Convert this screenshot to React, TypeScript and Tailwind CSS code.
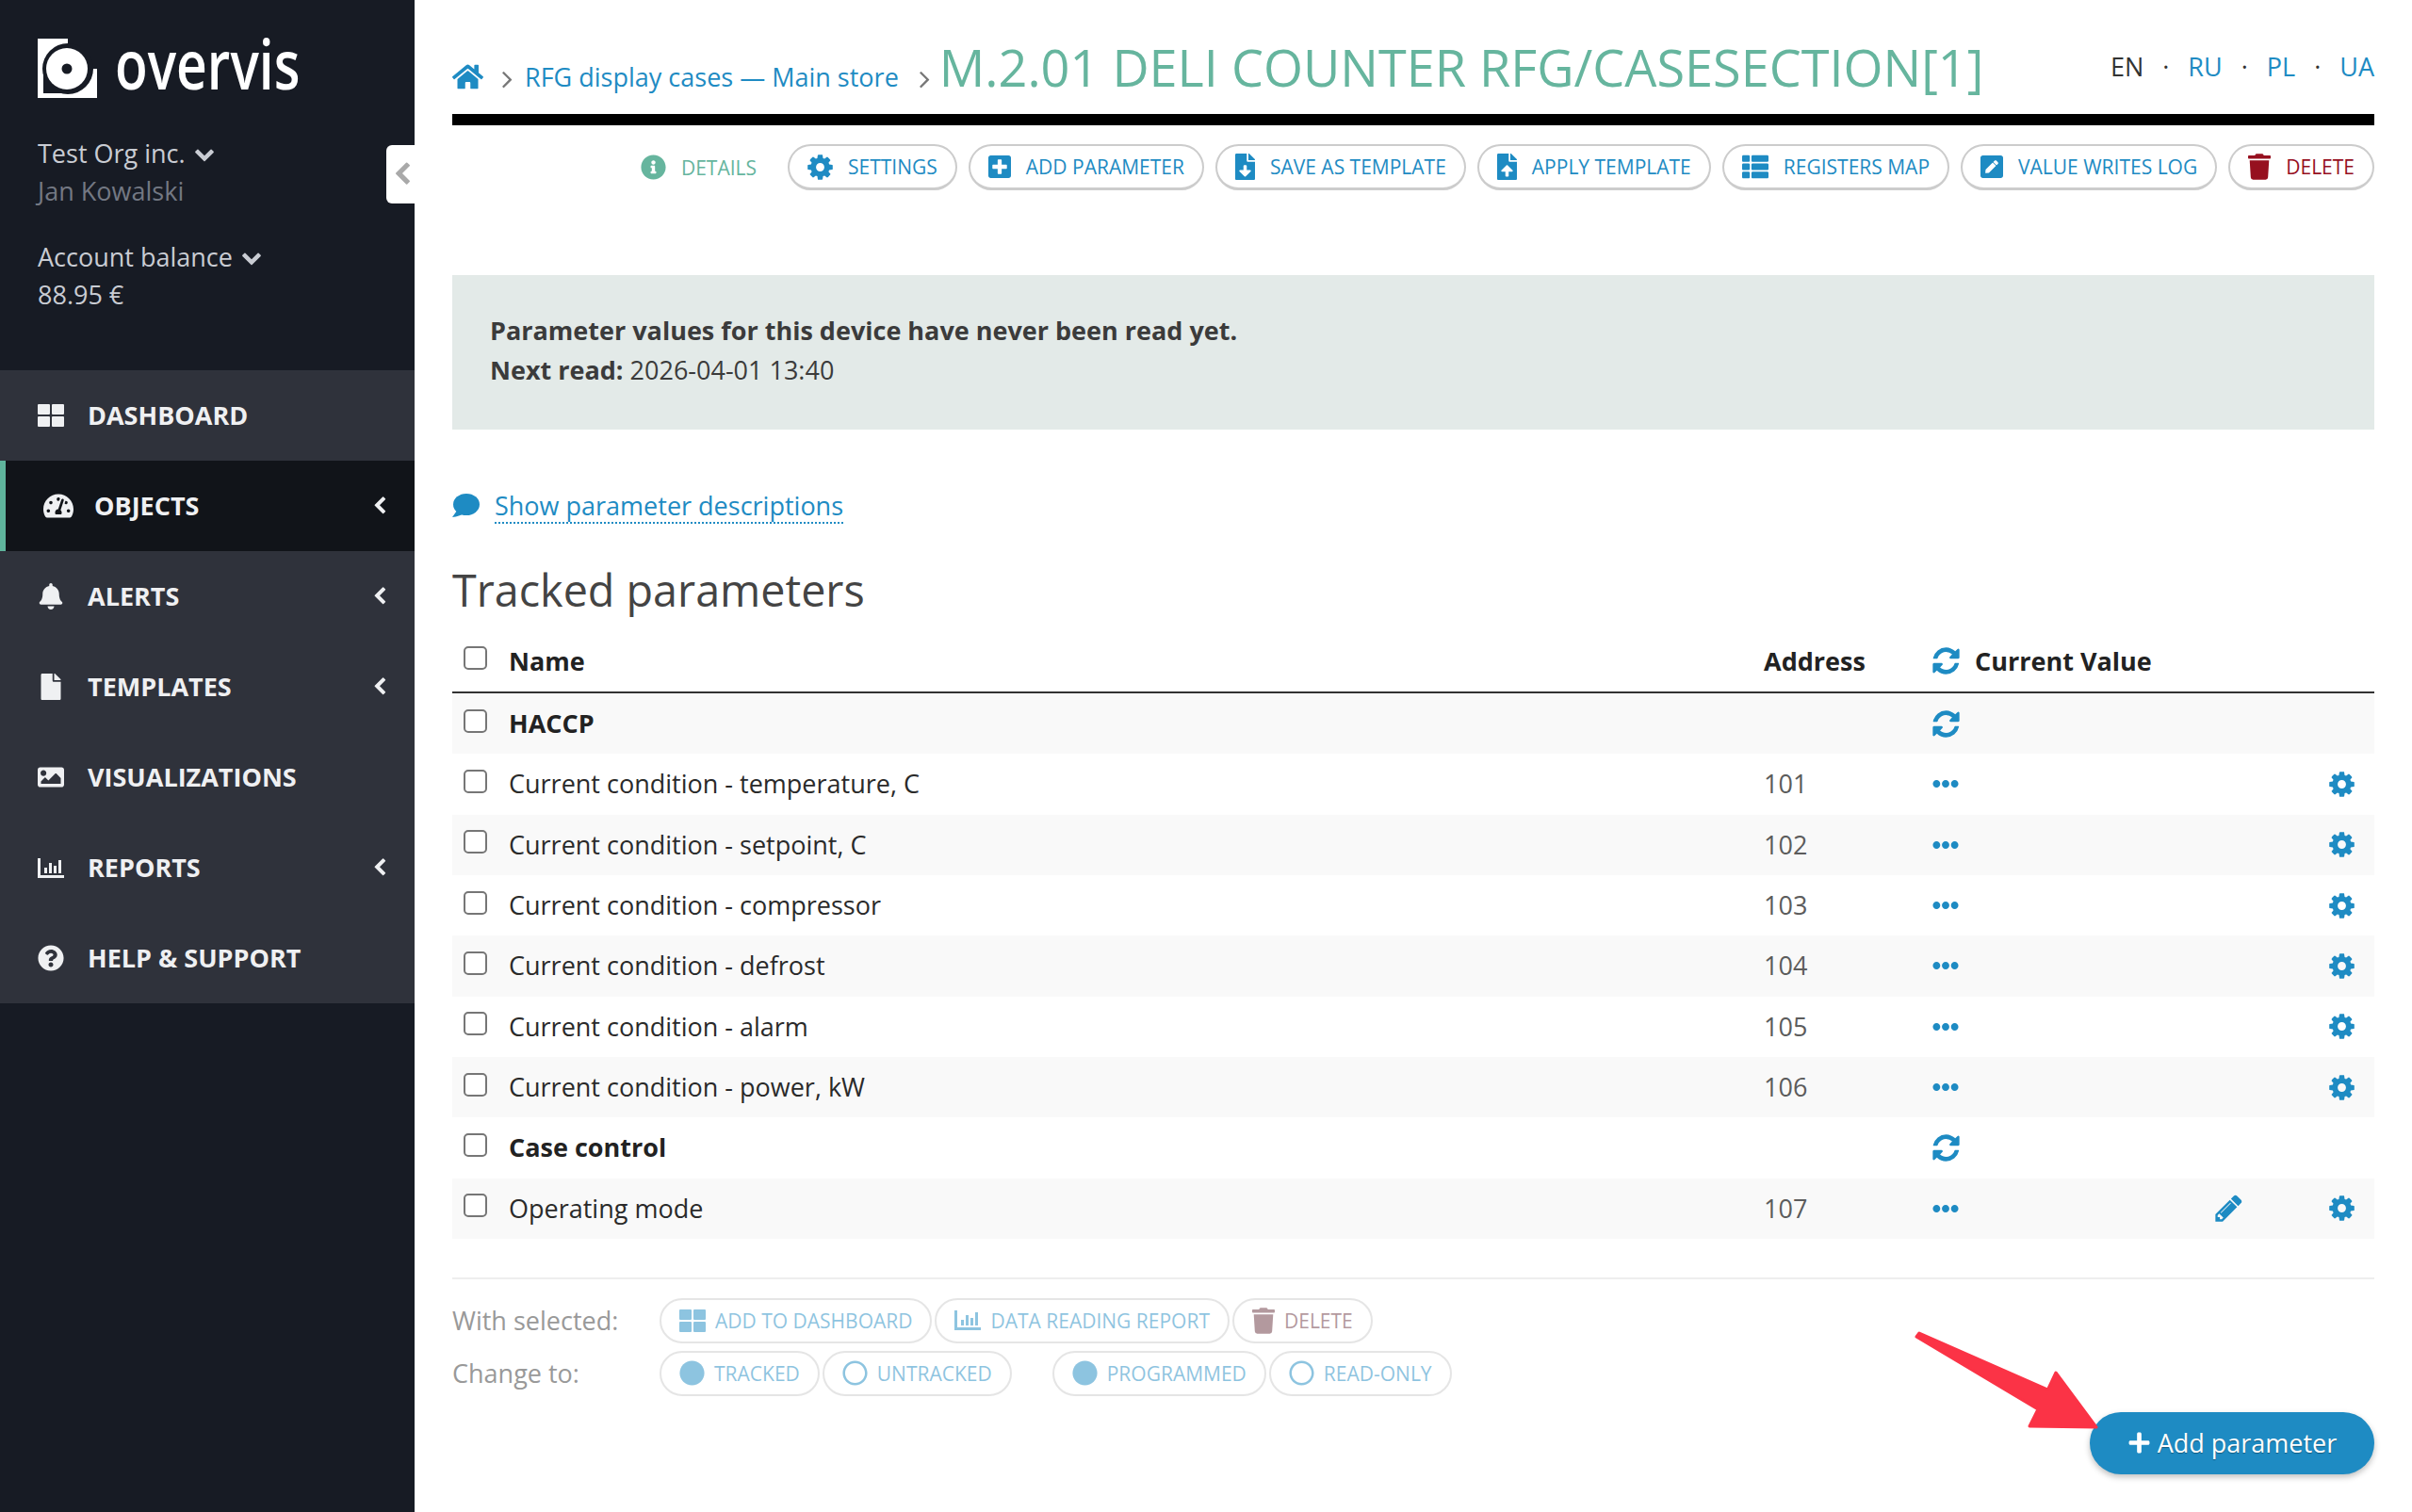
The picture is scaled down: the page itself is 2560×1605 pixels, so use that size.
import type { ReactNode } from 'react';
import {
  FaBell,
  FaCircle,
  FaEllipsisH,
  FaFile,
  FaFileDownload,
  FaFileUpload,
  FaHome,
  FaImage,
  FaInfoCircle,
  FaPenSquare,
  FaPlus,
  FaPlusSquare,
  FaQuestionCircle,
  FaRegCircle,
  FaTachometerAlt,
  FaThList,
  FaTrash,
} from 'react-icons/fa';

const CHEVRON_LEFT =
  'M1427 301l-531 531 531 531q19 19 19 45t-19 45l-166 166q-19 19-45 19t-45-19l-742-742q-19-19-19-45t19-45l742-742q19-19 45-19t45 19l166 166q19 19 19 45t-19 45z';
const CHEVRON_DOWN =
  'M1683 808l-742 741q-19 19-45 19t-45-19l-742-741q-19-19-19-45.5t19-45.5l166-165q19-19 45-19t45 19l531 531 531-531q19-19 45-19t45 19l166 165q19 19 19 45.5t-19 45.5z';
const ANGLE_RIGHT =
  'M1171 960q0 13-10 23l-466 466q-10 10-23 10t-23-10l-50-50q-10-10-10-23t10-23l393-393-393-393q-10-10-10-23t10-23l50-50q10-10 23-10t23 10l466 466q10 10 10 23z';
const PENCIL =
  'M491 1536l91-91-235-235-91 91v107h128v128h107zm523-928q0-22-22-22-10 0-17 7l-542 542q-7 7-7 17 0 22 22 22 10 0 17-7l542-542q7-7 7-17zm-54-192l416 416-832 832h-416v-416zm683 96q0 53-37 90l-166 166-416-416 166-165q36-38 90-38 53 0 91 38l235 234q37 39 37 91z';
const REFRESH =
  'M1639 1056q0 5-1 7-64 268-268 434.5t-478 166.5q-146 0-282.5-55t-243.5-157l-129 129q-19 19-45 19t-45-19-19-45v-448q0-26 19-45t45-19h448q26 0 45 19t19 45-19 45l-137 137q71 66 161 102t187 36q134 0 250-65t186-179q11-17 53-117 8-23 30-23h192q13 0 22.5 9.5t9.5 22.5zm25-800v448q0 26-19 45t-45 19h-448q-26 0-45-19t-19-45 19-45l138-138q-148-137-349-137-134 0-250 65t-186 179q-11 17-53 117-8 23-30 23h-199q-13 0-22.5-9.5t-9.5-22.5v-7q65-268 270-434.5t480-166.5q146 0 284 55.5t245 156.5l130-129q19-19 45-19t45 19 19 45z';
const COG =
  'M1152 896q0-106-75-181t-181-75-181 75-75 181 75 181 181 75 181-75 75-181zm512-109v222q0 12-8 23t-20 13l-185 28q-19 54-39 91 35 50 107 138 10 12 10 25t-9 23q-27 37-99 108t-94 71q-12 0-26-9l-138-108q-44 23-91 38-16 136-29 186-7 28-36 28h-222q-14 0-24.5-8.5t-11.5-21.5l-28-184q-49-16-90-37l-141 107q-10 9-25 9-14 0-25-11-126-114-165-168-7-10-7-23 0-12 8-23 15-21 51-66.5t54-70.5q-27-50-41-99l-183-27q-13-2-21-12.5t-8-23.5v-222q0-12 8-23t19-13l186-28q14-46 39-92-40-57-107-138-10-12-10-24 0-10 9-23 26-36 98.5-107.5t94.5-71.5q13 0 26 10l138 107q44-23 91-38 16-136 29-186 7-28 36-28h222q14 0 24.5 8.5t11.5 21.5l28 184q49 16 90 37l142-107q9-9 24-9 13 0 25 10 129 119 165 170 7 8 7 22 0 12-8 23-15 21-51 66.5t-54 70.5q26 50 41 98l183 28q13 2 21 12.5t8 23.5z';

function Fa4({ d, size, className }: { d: string; size: number; className?: string }) {
  return (
    <svg viewBox="0 0 1792 1792" width={size} height={size} fill="currentColor" className={`shrink-0 ${className ?? ''}`}>
      <path d={d} />
    </svg>
  );
}

function GridIcon({ className }: { className?: string }) {
  return (
    <svg viewBox="0 0 28 24" className={className} fill="currentColor">
      <rect x="0" y="0" width="13" height="11" rx="1" />
      <rect x="15" y="0" width="13" height="11" rx="1" />
      <rect x="0" y="13" width="13" height="11" rx="1" />
      <rect x="15" y="13" width="13" height="11" rx="1" />
    </svg>
  );
}

function BarsIcon({ className }: { className?: string }) {
  return (
    <svg viewBox="0 0 28 21" className={className} fill="currentColor">
      <path d="M0 0h3v18h25v3H0z" />
      <rect x="7" y="10" width="3" height="6" />
      <rect x="12" y="5" width="3" height="11" />
      <rect x="17" y="8" width="3" height="8" />
      <rect x="22" y="2" width="3" height="14" />
    </svg>
  );
}

function CommentIcon() {
  return (
    <svg viewBox="0 0 29 25" className="h-[25px] w-[29px] shrink-0" fill="currentColor">
      <ellipse cx="15" cy="11.5" rx="14" ry="11.5" />
      <path d="M5 18 L0 25 Q8 24 12 21z" />
    </svg>
  );
}

function LogoMark() {
  return (
    <svg viewBox="0 0 63 63" className="h-[63px] w-[63px] shrink-0">
      <path d="M0 0H32V32H63V63H0Z" fill="#ffffff" />
      <circle cx="32" cy="32" r="27" fill="#171b24" />
      <rect x="6" y="32" width="26" height="26" fill="#171b24" />
      <circle cx="31" cy="32" r="22" fill="#ffffff" />
      <circle cx="31" cy="32" r="5.5" fill="#171b24" />
    </svg>
  );
}

const nav = [
  { label: 'DASHBOARD', icon: <GridIcon className="h-[24px] w-[28px]" /> },
  { label: 'OBJECTS', icon: <FaTachometerAlt size={32} />, active: true, more: true },
  { label: 'ALERTS', icon: <FaBell size={28} />, more: true },
  { label: 'TEMPLATES', icon: <FaFile size={28} />, more: true },
  { label: 'VISUALIZATIONS', icon: <FaImage size={28} /> },
  { label: 'REPORTS', icon: <BarsIcon className="h-[21px] w-[28px]" />, more: true },
  { label: 'HELP & SUPPORT', icon: <FaQuestionCircle size={28} /> },
];

function Sidebar() {
  return (
    <aside className="relative w-[440px] shrink-0 bg-[#171b24] pt-[41px]">
      <div className="flex h-[63px] items-center pl-[40px]">
        <LogoMark />
        <span className="ml-[19px] origin-left scale-x-[0.79] pb-[11px] text-[72px] leading-[63px] font-semibold text-white">
          overvis
        </span>
      </div>
      <div className="mt-[39px] pl-[40px] text-[27px] leading-[40px] text-[#c9ccd3]">
        <div className="flex items-center gap-[9px]">
          Test Org inc. <Fa4 d={CHEVRON_DOWN} size={22} />
        </div>
        <div className="text-[#737883]">Jan Kowalski</div>
        <div className="mt-[30px] flex items-center gap-[9px]">
          Account balance <Fa4 d={CHEVRON_DOWN} size={22} />
        </div>
        <div>88.95 €</div>
      </div>
      <nav className="mt-[60px]">
        {nav.map((item) => (
          <a
            key={item.label}
            className={`flex h-[96px] items-center text-[27px] font-bold text-[#eff0f2] ${
              item.active
                ? 'border-l-[6px] border-[#5fb49c] bg-[#111419] pl-[40px]'
                : 'bg-[#2f323b] pl-[40px]'
            }`}
          >
            <span className={`flex shrink-0 items-center ${item.active ? 'w-[54px]' : 'w-[53px]'}`}>
              {item.icon}
            </span>
            <span className="flex-1">{item.label}</span>
            {item.more && <Fa4 d={CHEVRON_LEFT} size={20} className="mr-[27px]" />}
          </a>
        ))}
      </nav>
      <button className="absolute top-[154px] right-0 flex h-[62px] w-[30px] items-center justify-center rounded-l-[6px] bg-white pl-[3px] text-[#a9a9a9]">
        <Fa4 d={CHEVRON_LEFT} size={26} />
      </button>
    </aside>
  );
}

function ToolButton({ icon, label, red }: { icon: ReactNode; label: string; red?: boolean }) {
  return (
    <a
      className={`flex h-[49px] items-center gap-[16px] rounded-full border-2 border-b-[3px] border-[#cccccc] px-[19px] text-[21px] ${
        red ? 'text-[#96101f]' : 'text-[#1e8bc3]'
      }`}
    >
      {icon}
      {label}
    </a>
  );
}

function BulkButton({ icon, label, red }: { icon: ReactNode; label: string; red?: boolean }) {
  return (
    <a
      className={`flex h-[48px] items-center gap-[10px] rounded-full border-2 border-[#cccccc] px-[19px] text-[21px] opacity-50 ${
        red ? 'text-[#6a3540]' : 'text-[#1e8bc3]'
      }`}
    >
      {icon}
      {label}
    </a>
  );
}

const rowGrid = 'grid grid-cols-[60px_1332px_179px_300px_121px_48px] items-center';

const params = [
  { name: 'HACCP', group: true },
  { name: 'Current condition - temperature, C', addr: '101' },
  { name: 'Current condition - setpoint, C', addr: '102' },
  { name: 'Current condition - compressor', addr: '103' },
  { name: 'Current condition - defrost', addr: '104' },
  { name: 'Current condition - alarm', addr: '105' },
  { name: 'Current condition - power, kW', addr: '106' },
  { name: 'Case control', group: true },
  { name: 'Operating mode', addr: '107', edit: true },
];

function Check() {
  return (
    <input
      type="checkbox"
      className="ml-[12px] -mt-[6px] block h-[25px] w-[25px] appearance-none rounded-[5px] border-2 border-[#767676] bg-white"
    />
  );
}

function ParamsTable() {
  return (
    <div>
      <div className={`${rowGrid} h-[69px] border-b-2 border-[#333333] pt-[2px] text-[#222222]`}>
        <Check />
        <div className="font-bold">Name</div>
        <div className="font-bold">Address</div>
        <div className="col-span-3 flex items-center gap-[14px] font-bold">
          <Fa4 d={REFRESH} size={33} className="-ml-[2px] text-[#1e8bc3]" />
          Current Value
        </div>
      </div>
      {params.map((p, i) => (
        <div
          key={p.name}
          className={`${rowGrid} h-[64.33px] ${
            i % 2 === 0 && p.name !== 'Case control' ? 'bg-[#f9f9f9]' : ''
          } text-[#2a2a2a]`}
        >
          <Check />
          <div className={p.group ? 'font-bold text-[#222222]' : ''}>{p.name}</div>
          <div className="text-[#5c5c5c]">{p.addr}</div>
          <div className="text-[#1e8bc3]">
            {p.group ? (
              <Fa4 d={REFRESH} size={33} className="-ml-[2px]" />
            ) : (
              <FaEllipsisH size={28} />
            )}
          </div>
          <div className="text-[#1e8bc3]">{p.edit && <Fa4 d={PENCIL} size={33} className="-ml-[2px]" />}</div>
          <div className="text-[#1e8bc3]">{!p.group && <Fa4 d={COG} size={31} className="-ml-[2px]" />}</div>
        </div>
      ))}
    </div>
  );
}

export default function App() {
  return (
    <div className="relative flex min-h-screen font-['Open_Sans',sans-serif] text-[27px] leading-[42px] text-[#333333]">
      <Sidebar />
      <main className="min-w-0 flex-1 px-[40px]">
        <header className="flex h-[133px] items-baseline border-b-[12px] border-black pt-[39px]">
          <FaHome size={33} className="mt-[26px] self-start text-[#1e8bc3]" />
          <Fa4 d={ANGLE_RIGHT} size={31} className="mt-[29px] ml-[10px] self-start text-[#777777]" />
          <a className="ml-[3px] text-[#1e8bc3]">RFG display cases — Main store</a>
          <Fa4 d={ANGLE_RIGHT} size={31} className="mt-[29px] ml-[12px] self-start text-[#777777]" />
          <h1 className="text-[54px] leading-[64px] text-[#66b59e]">
            M.2.01 DELI COUNTER RFG/CASESECTION[1]
          </h1>
          <div className="mt-[12px] ml-auto flex gap-[20px] self-start leading-[40px]">
            <span className="text-[#333333]">EN</span>
            <span>·</span>
            <a className="text-[#1e8bc3]">RU</a>
            <span>·</span>
            <a className="text-[#1e8bc3]">PL</a>
            <span>·</span>
            <a className="text-[#1e8bc3]">UA</a>
          </div>
        </header>

        <div className="mt-[20px] flex items-center justify-end gap-[12px]">
          <span className="mr-[21px] flex items-center gap-[16px] text-[21px] text-[#66b59e]">
            <FaInfoCircle size={27} />
            DETAILS
          </span>
          <ToolButton icon={<Fa4 d={COG} size={31} className="-mx-[2px]" />} label="SETTINGS" />
          <ToolButton icon={<FaPlusSquare className="h-[28px] w-[24px]" />} label="ADD PARAMETER" />
          <ToolButton icon={<FaFileDownload className="h-[28px] w-[21px]" />} label="SAVE AS TEMPLATE" />
          <ToolButton icon={<FaFileUpload className="h-[28px] w-[21px]" />} label="APPLY TEMPLATE" />
          <ToolButton icon={<FaThList size={28} />} label="REGISTERS MAP" />
          <ToolButton icon={<FaPenSquare className="h-[28px] w-[24px]" />} label="VALUE WRITES LOG" />
          <ToolButton red icon={<FaTrash className="h-[28px] w-[24px]" />} label="DELETE" />
        </div>

        <div className="mt-[90px] bg-[#e3eae8] px-[40px] pt-[38px] pb-[42px] text-[#3b3b3b]">
          <div className="font-bold">Parameter values for this device have never been read yet.</div>
          <div>
            <b className="font-bold">Next read:</b> 2026-04-01 13:40
          </div>
        </div>

        <div className="mt-[60px] flex items-center gap-[16px] text-[#1e8bc3]">
          <CommentIcon />
          <a className="border-b-2 border-dotted border-[#1e8bc3] pt-[4px] leading-[34px]">
            Show parameter descriptions
          </a>
        </div>

        <h2 className="mt-[40px] text-[46.7px] leading-[60px] text-[#444444]">Tracked parameters</h2>
        <div className="mt-[11px]">
          <ParamsTable />
        </div>

        <div className="mt-[41px] h-[2px] bg-[#eeeeee]" />

        <div className="mt-[20px] flex h-[48px] items-center gap-[3px]">
          <span className="w-[217px] text-[#999999]">With selected:</span>
          <BulkButton icon={<GridIcon className="h-[24px] w-[28px]" />} label="ADD TO DASHBOARD" />
          <BulkButton icon={<BarsIcon className="h-[21px] w-[28px]" />} label="DATA READING REPORT" />
          <BulkButton red icon={<FaTrash className="h-[28px] w-[24px]" />} label="DELETE" />
        </div>
        <div className="mt-[8px] flex h-[48px] items-center gap-[3px]">
          <span className="w-[217px] text-[#999999]">Change to:</span>
          <BulkButton icon={<FaCircle size={27} />} label="TRACKED" />
          <BulkButton icon={<FaRegCircle size={27} />} label="UNTRACKED" />
          <span className="w-[37px]" />
          <BulkButton icon={<FaCircle size={27} />} label="PROGRAMMED" />
          <BulkButton icon={<FaRegCircle size={27} />} label="READ-ONLY" />
        </div>

        <div className="mt-[17px] flex justify-end">
          <button className="flex h-[66px] w-[302px] items-center justify-center gap-[7px] rounded-full bg-[#1e8bc3] text-[27px] text-white shadow-[0_3px_6px_rgba(0,0,0,0.25)] [text-shadow:0_1px_1px_rgba(0,0,0,0.35)]">
            <FaPlus size={25} />
            Add parameter
          </button>
        </div>
      </main>

      <svg viewBox="0 0 200 110" className="absolute top-[1410px] left-[2030px] h-[110px] w-[200px]">
        <polygon
          points="7,5 143.5,65 152,47 195,105 124,104 133,86 4,9"
          fill="#fb3346"
          stroke="#fb3346"
          strokeWidth="3"
          strokeLinejoin="round"
        />
      </svg>
    </div>
  );
}
